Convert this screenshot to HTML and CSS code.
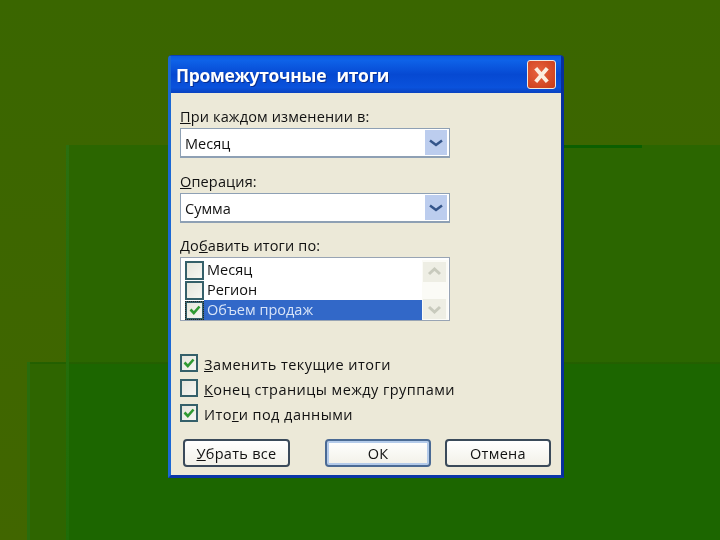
FILE: index.html
```html
<!DOCTYPE html>
<html lang="ru">
<head>
<meta charset="utf-8">
<title>Промежуточные итоги</title>
<link rel="stylesheet" href="styles.css">
</head>
<body>
<svg width="0" height="0" class="defs">
  <symbol id="chev" viewBox="0 0 22 25"><path d="M5 10.500 L11 15 L17 10.500" fill="none" stroke="#34558a" stroke-width="2.500"/></symbol>
  <symbol id="tick" viewBox="0 0 14 14"><path d="M2.500 6.500 L5.800 10 L11.500 3.500" fill="none" stroke="#2f9a32" stroke-width="2.600"/></symbol>
  <symbol id="chevg" viewBox="0 0 23 20"><path d="M6 12 L11.500 7 L17 12" fill="none" stroke="#c8cabd" stroke-width="3"/></symbol>
  <symbol id="chevd" viewBox="0 0 23 20"><path d="M6 8 L11.500 13 L17 8" fill="none" stroke="#c8cabd" stroke-width="3"/></symbol>
</svg>
<main class="dialog">
  <header class="titlebar">
    <h1 class="title">Промежуточные итоги</h1>
    <button class="close" aria-label="Закрыть">
      <svg viewBox="0 0 28 28" width="28" height="28"><path d="M8 7 L20 21 M20 7 L8 21" stroke="#fbeee0" stroke-width="4" fill="none"/></svg>
    </button>
  </header>
  <div class="client">
    <label class="field-label"><u>П</u>ри каждом изменении в:</label>
    <div class="combo"><span class="combo-value">Месяц</span><span class="combo-btn"><svg class="chev"><use href="#chev"/></svg></span></div>
    <label class="field-label l2"><u>О</u>перация:</label>
    <div class="combo"><span class="combo-value">Сумма</span><span class="combo-btn"><svg class="chev"><use href="#chev"/></svg></span></div>
    <label class="field-label l3">До<u>б</u>авить итоги по:</label>
    <div class="list">
      <div class="list-rows">
        <div class="row"><span class="box"></span><span class="row-text">Месяц</span></div>
        <div class="row"><span class="box"></span><span class="row-text">Регион</span></div>
        <div class="row current"><span class="box focus"><svg class="tick"><use href="#tick"/></svg></span><span class="row-text selected">Объем продаж</span></div>
      </div>
      <div class="scroll">
        <span class="sbtn"><svg class="schev"><use href="#chevg"/></svg></span>
        <span class="sbtn"><svg class="schev"><use href="#chevd"/></svg></span>
      </div>
    </div>
    <div class="options">
      <div class="opt"><span class="box"><svg class="tick"><use href="#tick"/></svg></span><span class="opt-text"><u>З</u>аменить текущие итоги</span></div>
      <div class="opt"><span class="box"></span><span class="opt-text"><u>К</u>онец страницы между группами</span></div>
      <div class="opt"><span class="box"><svg class="tick"><use href="#tick"/></svg></span><span class="opt-text">Ито<u>г</u>и под данными</span></div>
    </div>
    <div class="actions">
      <button class="btn b-clear"><u>У</u>брать все</button>
      <div class="actions-right">
        <button class="btn b-ok">ОК</button>
        <button class="btn b-cancel">Отмена</button>
      </div>
    </div>
  </div>
</main>
</body>
</html>
```

FILE: styles.css
```css
* { box-sizing: border-box; }
html, body { margin: 0; padding: 0; }
body {
  width: 720px;
  height: 540px;
  overflow: hidden;
  padding: 55px 0 0 168px;
  font-family: "Open Sans", "Liberation Sans", sans-serif;
  font-size: 14.500px;
  color: #111;
  background-color: #3a6600;
  background-image:
    linear-gradient(#2b6f10, #1f6c08),
    linear-gradient(#296c0c, #296c0c),
    linear-gradient(#0b5f00, #0b5f00),
    linear-gradient(#256000, #225f00),
    linear-gradient(#1c6600, #1c6600),
    linear-gradient(#2e6500, #2e6500),
    linear-gradient(#2b6600, #2b6600),
    linear-gradient(#3a6600, #416600);
  background-repeat: no-repeat;
  background-size: 3px 395px, 3px 178px, 78px 3px, 693px 2px, 653px 178px, 693px 178px, 653px 217px, 720px 540px;
  background-position: 66px 145px, 27px 362px, 564px 145px, 27px 362px, 67px 362px, 27px 362px, 67px 145px, 0 0;
}
.defs { position: absolute; }
.dialog {
  width: 396px;
  height: 423px;
  display: flex;
  flex-direction: column;
  background: #0a4fd6;
  border: solid #0c3fb5;
  border-width: 1px 3px 3px 3px;
  border-radius: 4px 4px 0 0;
  border-left-color: #1b68d4;
  border-right-color: #082f9c;
  border-bottom-color: #0a36a8;
  filter: blur(0.3px);
}
.titlebar {
  height: 37px;
  flex: none;
  display: flex;
  align-items: center;
  justify-content: space-between;
  padding: 0 5px 0 5px;
  background: linear-gradient(#0a5ae0 0, #0e62e8 12%, #0649d2 50%, #0a52dc 85%, #0942c0 100%);
}
.title {
  margin: 0;
  font-size: 17.500px;
  font-weight: 700;
  letter-spacing: -0.3px;
  word-spacing: 6px;
  color: #fff;
  text-shadow: 1px 1px 0 #0a2f90;
}
.close {
  width: 29px;
  height: 29px;
  padding: 0;
  display: flex;
  align-items: center;
  justify-content: center;
  border: 1px solid #f0e8e0;
  border-radius: 3px;
  background: radial-gradient(circle at 40% 40%, #e8633e, #c83a18);
}
.client {
  flex: 1;
  background: #ece9d8;
  padding: 14px 0 0 9px;
  display: flex;
  flex-direction: column;
}
.field-label { height: 20px; line-height: 20px; letter-spacing: 0.15px; }
.l2 { margin-top: 14px; }
.l3 { margin-top: 13px; }
.combo {
  width: 270px;
  height: 30px;
  margin-top: 1px;
  display: flex;
  align-items: center;
  justify-content: space-between;
  padding: 0 2px 0 4px;
  background: #fff;
  border: 1px solid #8ea0b4;
  border-bottom-width: 2px;
}
.combo-value { padding-top: 2px; }
.combo-btn {
  width: 22px;
  height: 25px;
  background: #bccdee;
  display: block;
}
.chev { width: 22px; height: 25px; display: block; }
.schev { width: 23px; height: 20px; display: block; }
.list {
  width: 270px;
  height: 64px;
  margin-top: 1px;
  display: flex;
  background: #fff;
  border: 1px solid #98a4b4;
  padding: 2px 1px 0 4px;
}
.list-rows { flex: 1; display: flex; flex-direction: column; }
.row { height: 20px; display: flex; align-items: center; }
.row-text { flex: 1; line-height: 20px; padding-left: 3px; }
.row .box { width: 19px; height: 19px; }
.selected { background: #3268c8; color: #d8e4f8; height: 20px; }
.box {
  width: 18px;
  height: 18px;
  flex: none;
  display: flex;
  align-items: center;
  justify-content: center;
  border: 2px solid #35606a;
  background: linear-gradient(135deg, #e6e6dc, #f6f6f2);
}
.box.focus { outline: 1px dotted #222; outline-offset: -1px; }
.tick { width: 14px; height: 14px; display: block; flex: none; }
.scroll {
  width: 26px;
  flex: none;
  display: flex;
  flex-direction: column;
  justify-content: space-between;
  padding: 2px 1px 1px 1px;
  background: #fbfbf6;
}
.sbtn { display: block; width: 23px; height: 20px; background: #eeeee4; }
.options { margin-top: 33px; display: flex; flex-direction: column; gap: 7px; }
.opt { display: flex; align-items: center; gap: 6px; height: 18px; letter-spacing: 0.45px; }
.opt-text { padding-top: 2px; }
.actions {
  margin-top: 17px;
  margin-left: 3px;
  width: 368px;
  display: flex;
  justify-content: space-between;
}
.actions-right { display: flex; gap: 14px; }
.btn {
  height: 28px;
  padding: 0;
  font: inherit;
  letter-spacing: 0.3px;
  color: #111;
  border: 2px solid #3a4a5a;
  border-radius: 4px;
  background: linear-gradient(#fff, #f2f1e8);
}
.b-clear { width: 107px; }
.b-ok { width: 106px; border-color: #4a6a94; box-shadow: inset 0 0 0 2px #b4cbea; }
.b-cancel { width: 106px; }
```
